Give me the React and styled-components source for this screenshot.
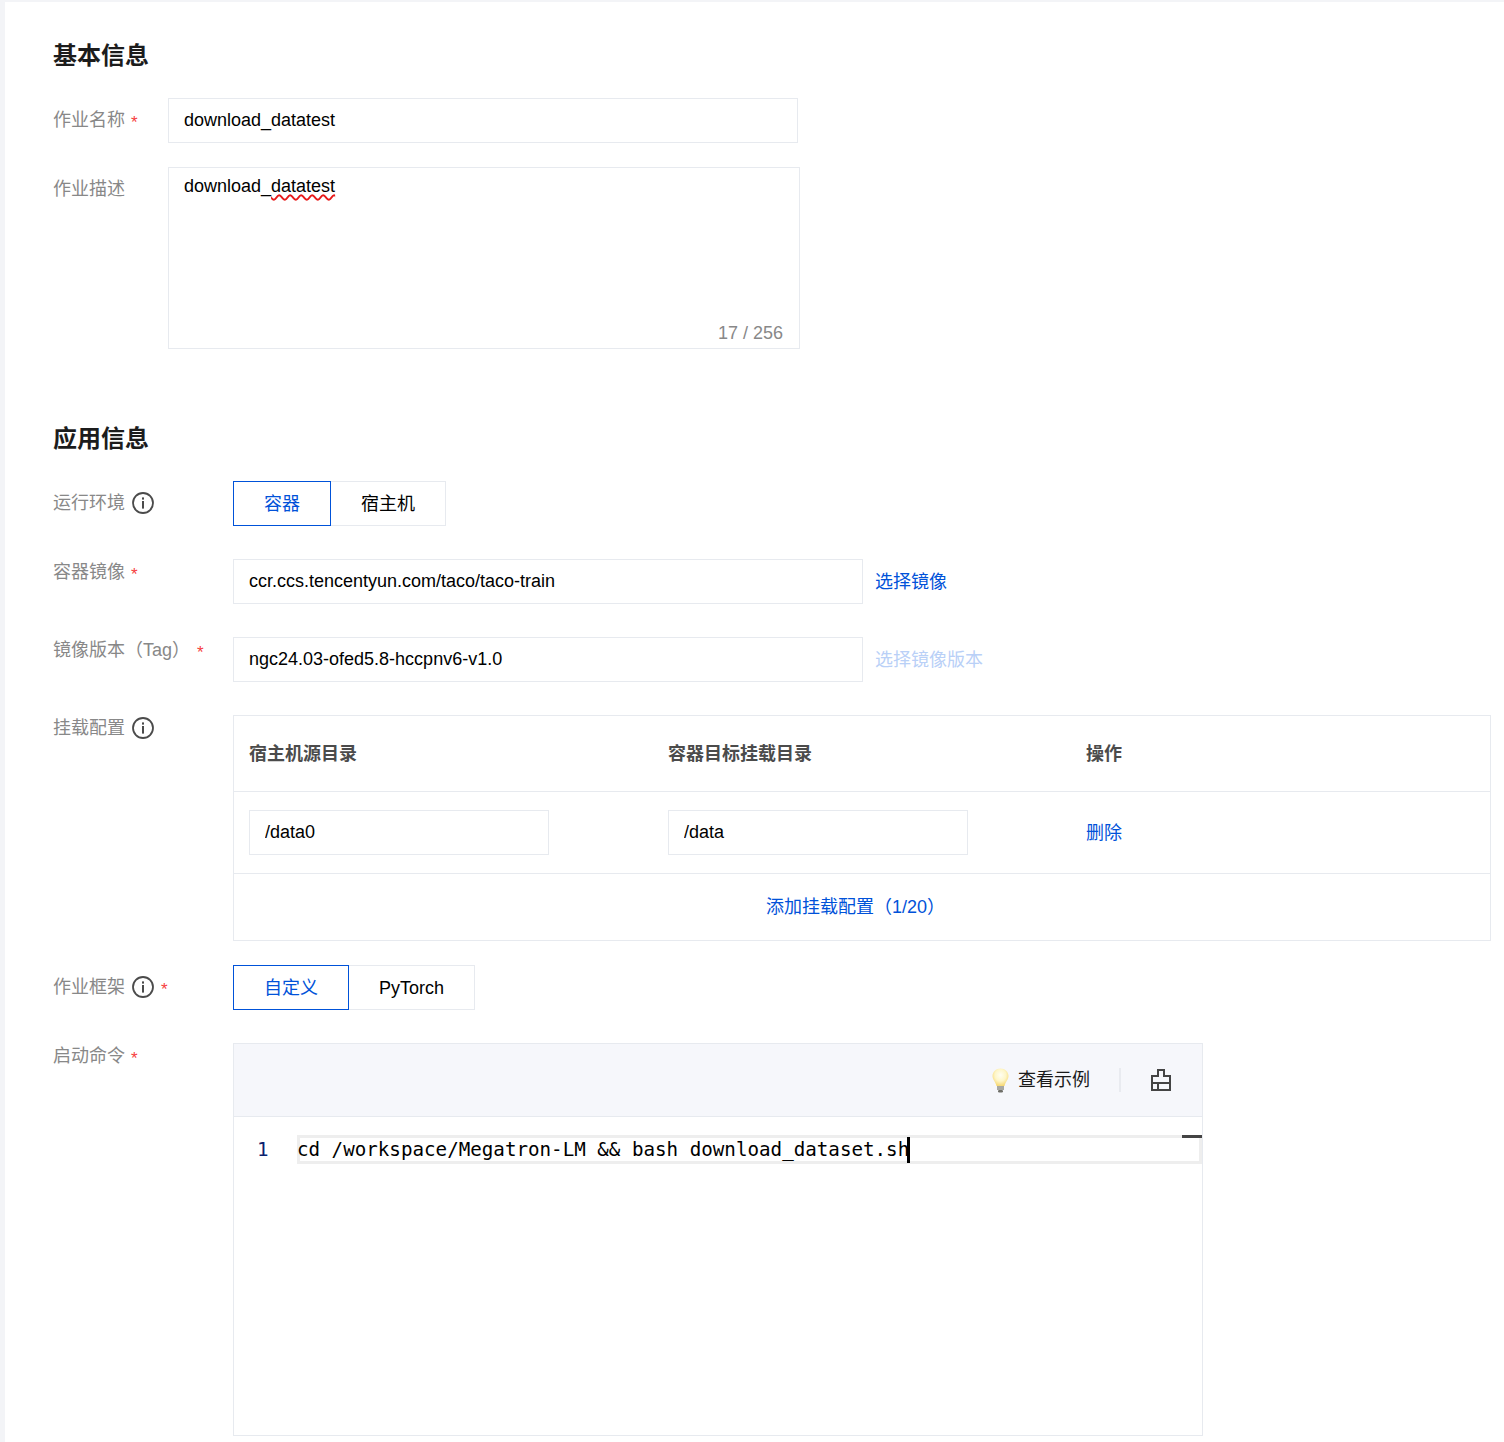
import React from 'react';
import styled, { createGlobalStyle } from 'styled-components';

const sans = `"Liberation Sans", "Noto Sans CJK SC", sans-serif`;
const line = '#e7eaef';
const blue = '#0052d9';

const GlobalStyle = createGlobalStyle`
  html, body {
    margin: 0;
    padding: 0;
    background: #f3f4f7;
  }
  body {
    font-family: ${sans};
    font-size: 18px;
    line-height: 24px;
    color: #000;
  }
  * { box-sizing: border-box; }
`;

const Page = styled.div`
  width: 1499px;
  height: 1440px;
  margin: 2px 0 0 5px;
  padding: 33px 0 0 48px;
  background: #fff;
  overflow: hidden;
`;

const Title = styled.h2`
  margin: ${p => p.$top || 0}px 0 0;
  height: 40px;
  font-size: 24px;
  line-height: 42px;
  font-weight: 700;
  color: #1c1c1c;
`;

const Form = styled.div`
  display: flex;
  flex-direction: column;
  margin-top: 23px;
`;

const Row = styled.div`
  display: grid;
  grid-template-columns: ${p => p.$label}px auto;
  justify-content: start;
  margin-bottom: ${p => p.$gap}px;
`;

const Label = styled.div`
  display: flex;
  align-items: center;
  height: 24px;
  margin-top: ${p => (p.$mid ? 10 : 1)}px;
  font-size: 18px;
  line-height: 24px;
  color: #888;
  white-space: nowrap;
`;

const Star = styled.span`
  margin-left: ${p => p.$left || 6}px;
  font-size: 17px;
  line-height: 18px;
  padding-top: 6px;
  color: #f64041;
`;

const Field = styled.input`
  display: block;
  width: ${p => p.$w}px;
  height: 45px;
  padding: 0 15px;
  border: 1px solid ${line};
  outline: none;
  background: #fff;
  font-family: ${sans};
  font-size: 18px;
  color: #000;
`;

const Area = styled.div`
  position: relative;
  width: 632px;
  height: 182px;
  padding: 5px 15px;
  border: 1px solid ${line};
  line-height: 26px;
`;

const Misspelt = styled.span`
  text-decoration: underline wavy #e81818 1.6px;
  text-underline-offset: 2px;
`;

const Count = styled.span`
  position: absolute;
  right: 16px;
  bottom: 2px;
  color: #888;
`;

const Segment = styled.div`
  display: flex;
`;

const SegButton = styled.div`
  display: flex;
  align-items: center;
  height: 45px;
  padding: 1px 30px 0;
  margin-left: ${p => (p.$on ? 0 : -1)}px;
  border: 1px solid ${p => (p.$on ? blue : line)};
  color: ${p => (p.$on ? blue : '#000')};
  position: relative;
  z-index: ${p => (p.$on ? 1 : 0)};
`;

const Inline = styled.div`
  display: flex;
  align-items: center;
  gap: 12px;
`;

const LinkText = styled.a`
  color: ${p => (p.$off ? '#b9d0f7' : blue)};
  font-size: 18px;
  white-space: nowrap;
`;

const Table = styled.div`
  width: 1258px;
  border: 1px solid ${line};
`;

const TableRow = styled.div`
  display: grid;
  grid-template-columns: 419px 418px 1fr;
  align-items: center;
  height: ${p => p.$h}px;
  padding-left: 15px;
  border-bottom: 1px solid ${line};
`;

const HeadCell = styled.div`
  font-weight: 700;
  color: #4b4b4b;
`;

const TableFoot = styled.div`
  display: flex;
  align-items: center;
  justify-content: center;
  height: 66px;
  padding-right: 13px;
`;

const Editor = styled.div`
  position: relative;
  width: 970px;
  height: 393px;
  border: 1px solid ${line};
`;

const EditorBar = styled.div`
  display: flex;
  align-items: center;
  justify-content: flex-end;
  height: 73px;
  padding-right: 31px;
  background: #f6f7fb;
  border-bottom: 1px solid ${line};
`;

const Example = styled.div`
  display: flex;
  align-items: center;
  gap: 9px;
  color: #1a1a1a;
`;

const BarDivider = styled.span`
  width: 2px;
  height: 24px;
  margin: 0 30px 0 29px;
  background: #e9ebf0;
`;

const CodeLine = styled.div`
  display: flex;
  margin-top: 18px;
  height: 29px;
`;

const LineNo = styled.div`
  width: 63px;
  padding-left: 23px;
  font-family: "DejaVu Sans Mono", monospace;
  font-size: 19.2px;
  line-height: 29px;
  color: #0b216f;
`;

const CodeText = styled.div`
  position: relative;
  width: 906px;
  height: 29px;
  border: 3px solid #eeeeee;
  font-family: "DejaVu Sans Mono", monospace;
  font-size: 19.2px;
  line-height: 23px;
  white-space: pre;
  color: #000;
`;

const CodeRun = styled.span`
  margin-left: -3px;
`;

const Cursor = styled.span`
  position: absolute;
  left: 607px;
  top: -1px;
  width: 3px;
  height: 26px;
  background: #000;
`;

const RulerMark = styled.span`
  position: absolute;
  right: -3px;
  top: -3px;
  width: 20px;
  height: 3px;
  background: #444;
`;

const InfoWrap = styled.svg`
  margin-left: 6px;
  flex: none;
`;

const InfoIcon = () => (
  <InfoWrap width="24" height="24" viewBox="0 0 24 24" fill="none">
    <circle cx="12" cy="12" r="10" stroke="#4b4b4b" strokeWidth="1.8" />
    <rect x="11" y="6.4" width="2" height="2.2" fill="#4b4b4b" />
    <rect x="11" y="10" width="2" height="7.6" fill="#4b4b4b" />
  </InfoWrap>
);

const BulbIcon = () => (
  <svg width="17" height="25" viewBox="0 0 17 25">
    <defs>
      <radialGradient id="bulbGlow" cx="50%" cy="38%" r="62%">
        <stop offset="0%" stopColor="#fffef2" />
        <stop offset="55%" stopColor="#fef6c8" />
        <stop offset="100%" stopColor="#f7d873" />
      </radialGradient>
    </defs>
    <path d="M8.5 .5C4 .5 .5 4 .5 8c0 3.8 3.2 5.8 4 10h8c.8-4.2 4-6.2 4-10 0-4-3.5-7.5-8-7.5z" fill="url(#bulbGlow)" />
    <rect x="5" y="18" width="7" height="4" fill="#a8a8a2" />
    <rect x="6" y="22" width="5" height="2.5" rx="1.2" fill="#6f6f68" />
  </svg>
);

const BrushIcon = () => (
  <svg width="20" height="22" viewBox="0 0 20 22" fill="none" stroke="#444" strokeWidth="2">
    <path d="M1 21V7h6V1h6v6h6v14z" />
    <path d="M1 14h18" />
    <path d="M7 14v7" />
  </svg>
);

const App = () => (
  <>
    <GlobalStyle />
    <Page>
      <Title>基本信息</Title>
      <Form>
        <Row $label={115} $gap={24}>
          <Label $mid>作业名称<Star>*</Star></Label>
          <Field $w={630} readOnly value="download_datatest" />
        </Row>
        <Row $label={115} $gap={0}>
          <Label $mid>作业描述</Label>
          <Area>
            download_<Misspelt>datatest</Misspelt>
            <Count>17 / 256</Count>
          </Area>
        </Row>
      </Form>

      <Title $top={69}>应用信息</Title>
      <Form>
        <Row $label={180} $gap={33}>
          <Label $mid>运行环境<InfoIcon /></Label>
          <Segment>
            <SegButton $on>容器</SegButton>
            <SegButton>宿主机</SegButton>
          </Segment>
        </Row>
        <Row $label={180} $gap={33}>
          <Label>容器镜像<Star>*</Star></Label>
          <Inline>
            <Field $w={630} readOnly value="ccr.ccs.tencentyun.com/taco/taco-train" />
            <LinkText>选择镜像</LinkText>
          </Inline>
        </Row>
        <Row $label={180} $gap={33}>
          <Label>镜像版本（Tag）<Star $left={7}>*</Star></Label>
          <Inline>
            <Field $w={630} readOnly value="ngc24.03-ofed5.8-hccpnv6-v1.0" />
            <LinkText $off>选择镜像版本</LinkText>
          </Inline>
        </Row>
        <Row $label={180} $gap={24}>
          <Label>挂载配置<InfoIcon /></Label>
          <Table>
            <TableRow $h={76}>
              <HeadCell>宿主机源目录</HeadCell>
              <HeadCell>容器目标挂载目录</HeadCell>
              <HeadCell>操作</HeadCell>
            </TableRow>
            <TableRow $h={82}>
              <Field $w={300} readOnly value="/data0" />
              <Field $w={300} readOnly value="/data" />
              <LinkText>删除</LinkText>
            </TableRow>
            <TableFoot>
              <LinkText>添加挂载配置（1/20）</LinkText>
            </TableFoot>
          </Table>
        </Row>
        <Row $label={180} $gap={33}>
          <Label $mid>作业框架<InfoIcon /><Star>*</Star></Label>
          <Segment>
            <SegButton $on>自定义</SegButton>
            <SegButton>PyTorch</SegButton>
          </Segment>
        </Row>
        <Row $label={180} $gap={0}>
          <Label>启动命令<Star>*</Star></Label>
          <Editor>
            <EditorBar>
              <Example><BulbIcon />查看示例</Example>
              <BarDivider />
              <BrushIcon />
            </EditorBar>
            <CodeLine>
              <LineNo>1</LineNo>
              <CodeText>
                <CodeRun>cd /workspace/Megatron-LM &amp;&amp; bash download_dataset.sh</CodeRun>
                <Cursor />
                <RulerMark />
              </CodeText>
            </CodeLine>
          </Editor>
        </Row>
      </Form>
    </Page>
  </>
);

export default App;
